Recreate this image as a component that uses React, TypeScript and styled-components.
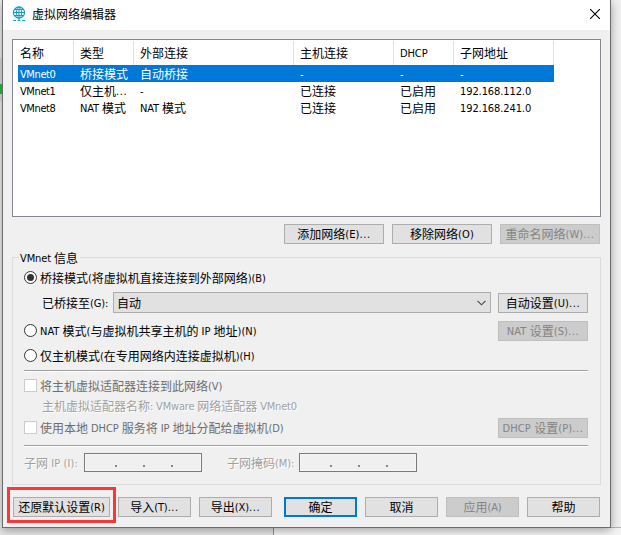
import React from 'react';
import styled, { createGlobalStyle, css } from 'styled-components';

const GlobalStyle = createGlobalStyle`
  * { box-sizing: border-box; }
  body {
    margin: 0;
    font-family: "Noto Sans CJK SC", sans-serif;
    font-size: 12px;
    line-height: 16px;
    color: #000;
    white-space: nowrap;
  }
`;

const Desktop = styled.div`
  position: relative;
  width: 621px;
  height: 535px;
  overflow: hidden;
  background: #f0f0f0;
`;

const Backdrop = styled.div`
  position: absolute;
  left: 0;
  top: 527px;
  width: 274px;
  height: 8px;
  background: #e6e6e6;
  border-right: 1px solid #8e8e8e;
`;

const BackdropEdge = styled.div`
  position: absolute;
  left: 274px;
  right: 0;
  top: 527px;
  height: 8px;
  background: #f4f4f4;
  border-top: 1px solid #b4b4b4;
`;

const SideMark = styled.div<{ $top: number; $height: number; $color: string }>`
  position: absolute;
  left: 0;
  top: ${p => p.$top}px;
  width: 2px;
  height: ${p => p.$height}px;
  background: ${p => p.$color};
`;

const Window = styled.div`
  position: relative;
  width: 609px;
  height: 528px;
  margin-left: 2px;
  border: 1px solid #6b6b6b;
  border-top: 0;
  background: #f0f0f0;
  box-shadow: 0 2px 9px rgba(0, 0, 0, 0.36);
`;

const TitleBar = styled.header`
  display: flex;
  align-items: center;
  height: 30px;
  padding: 0 10px 2px 9px;
  background: #fff;
`;

const Title = styled.h1`
  flex: 1;
  margin: 0 0 0 6px;
  font-size: 12px;
  font-weight: 400;
  line-height: 16px;
`;

const CloseButton = styled.button`
  display: flex;
  padding: 0;
  border: 0;
  background: none;
`;

const Body = styled.main`
  padding: 9px 9px 0;
`;

const Latin = styled.span<{ $spacing: number }>`
  font-family: "DejaVu Sans Condensed", "DejaVu Sans", sans-serif;
  font-stretch: condensed;
  font-size: 11px;
  line-height: 1;
  vertical-align: 1px;
  letter-spacing: ${p => p.$spacing}px;
`;

const Table = styled.div`
  height: 178px;
  padding: 1px 5px;
  border: 1px solid #828790;
  background: #fff;
`;

const rowGrid = css`
  display: grid;
  grid-template-columns: 56px 60px 160px 100px 60px 100px;
  width: 536px;
`;

const HeaderRow = styled.div`
  ${rowGrid}
  height: 24px;
`;

const HeaderCell = styled.div`
  padding: 4px 0 0 2px;
  border-right: 1px solid #e0e0e0;
  & + & { padding-left: 6px; }
`;

const Row = styled.div<{ $selected?: boolean }>`
  ${rowGrid}
  height: 17px;
  color: ${p => (p.$selected ? '#fff' : '#000')};
  background: ${p => (p.$selected ? '#0078d7' : 'transparent')};
`;

const Cell = styled.div`
  padding-left: 2px;
  line-height: 17px;
  & + & { padding-left: 6px; }
`;

const TableActions = styled.div`
  display: flex;
  justify-content: flex-end;
  gap: 8px;
  padding: 7px 1px 0 0;
`;

const Button = styled.button<{ $width: number; $primary?: boolean }>`
  flex: none;
  width: ${p => p.$width}px;
  height: 20px;
  padding: 0;
  border: ${p => (p.$primary ? '2px solid #0078d7' : '1px solid #adadad')};
  background: #e1e1e1;
  color: #000;
  font: inherit;
  line-height: ${p => (p.$primary ? 16 : 18)}px;
  text-align: center;
  white-space: nowrap;
  &:disabled {
    border-color: #bfbfbf;
    background: #ccc;
    color: #838383;
  }
`;

const Group = styled.section`
  height: 228px;
  margin-top: 13px;
  padding: 0 12px 0 11px;
  border: 1px solid #dcdcdc;
`;

const Legend = styled.div`
  width: fit-content;
  height: 16px;
  margin: -8px 0 0 -5px;
  padding: 0 2px 0 1px;
  background: #f0f0f0;
`;

const Line = styled.div<{ $height: number; $top?: number; $indent?: number; $gap?: number; $end?: boolean }>`
  display: flex;
  align-items: ${p => (p.$end ? 'flex-end' : 'center')};
  height: ${p => p.$height}px;
  margin-top: ${p => p.$top ?? 0}px;
  padding-left: ${p => p.$indent ?? 0}px;
  gap: ${p => p.$gap ?? 3}px;
`;

const Label = styled.span<{ $tone?: 'disabled' | 'etched'; $width?: number; $lift?: number }>`
  flex: ${p => (p.$width ? 'none' : '1')};
  width: ${p => (p.$width ? `${p.$width}px` : 'auto')};
  padding-bottom: ${p => p.$lift ?? 0}px;
  color: ${p => (p.$tone === 'disabled' ? '#6d6d6d' : p.$tone === 'etched' ? '#a0a0a0' : '#000')};
  text-shadow: ${p => (p.$tone === 'etched' ? '1px 1px 0 #fff' : 'none')};
`;

const Radio = styled.span<{ $checked?: boolean; $raised?: boolean }>`
  display: grid;
  place-items: center;
  flex: none;
  width: 13px;
  height: 13px;
  margin-bottom: ${p => (p.$raised ? 1 : 0)}px;
  border: 1px solid #333;
  border-radius: 50%;
  background: #fff;
  &::after {
    content: "";
    width: 7px;
    height: 7px;
    border-radius: 50%;
    background: ${p => (p.$checked ? '#333' : 'transparent')};
  }
`;

const Checkbox = styled.span<{ $raised?: boolean }>`
  flex: none;
  width: 13px;
  height: 13px;
  margin-bottom: ${p => (p.$raised ? 1 : 0)}px;
  border: 1px solid #ccc;
  background: #fff;
`;

const Combo = styled.div`
  display: flex;
  align-items: center;
  justify-content: space-between;
  flex: none;
  width: 378px;
  height: 21px;
  margin-right: 7px;
  padding: 0 4px 0 3px;
  border: 1px solid #adadad;
  background: #e1e1e1;
`;

const Separator = styled.div`
  height: 2px;
  border-top: 1px solid #a0a0a0;
  border-bottom: 1px solid #fff;
`;

const AddressField = styled.div`
  display: flex;
  flex: none;
  gap: 26px;
  width: 118px;
  height: 19px;
  padding: 11px 0 0 30px;
  border: 1px solid #7a7a7a;
  box-shadow: inset 0 0 0 1px #f6f6f6;
`;

const Dot = styled.i`
  width: 2px;
  height: 2px;
  background: #858585;
`;

const Footer = styled.footer`
  display: flex;
  gap: 8px;
  padding: 12px 0 0 1px;
`;

const Spacer = styled.span`
  width: 4px;
  margin-right: -8px;
`;

const Highlight = styled.div`
  position: absolute;
  left: 4px;
  top: 487px;
  width: 109px;
  height: 36px;
  border: 3px solid #fb3636;
`;

function T({ children, spacing = -0.1 }: { children: string; spacing?: number }) {
  const runs = children.match(/\.{3}|(?:(?!\.{3})[\x20-\x7e])+|[^\x20-\x7e]+/g) ?? [];
  return (
    <>
      {runs.map((run, i) => {
        if (run === '...') return <Latin key={i} $spacing={0.6}>{run}</Latin>;
        return /^[\x20-\x7e]/.test(run) ? <Latin key={i} $spacing={spacing}>{run}</Latin> : run;
      })}
    </>
  );
}

function GlobeIcon() {
  return (
    <svg width="14" height="16" viewBox="0 0 14 16" fill="none" stroke="#149bc5">
      <circle cx="7" cy="6.5" r="5.6" strokeWidth="1.1" />
      <ellipse cx="7" cy="6.5" rx="2.7" ry="5.6" />
      <path d="M1.5 6.5h11M2.3 3.5h9.4M2.3 9.5h9.4M7 1v13" />
      <path d="M1 14.5h3M5.5 14.5h3M10 14.5h3" stroke="#16b89c" />
    </svg>
  );
}

const columns = ['名称', '类型', '外部连接', '主机连接', 'DHCP', '子网地址'];
const networks = [
  ['VMnet0', '桥接模式', '自动桥接', '-', '-', '-'],
  ['VMnet1', '仅主机...', '-', '已连接', '已启用', '192.168.112.0'],
  ['VMnet8', 'NAT 模式', 'NAT 模式', '已连接', '已启用', '192.168.241.0'],
];

export default function App() {
  return (
    <Desktop>
      <GlobalStyle />
      <Backdrop />
      <BackdropEdge />
      <Window>
        <TitleBar>
          <GlobeIcon />
          <Title>虚拟网络编辑器</Title>
          <CloseButton aria-label="关闭">
            <svg width="10" height="10" viewBox="0 0 10 10" stroke="#000" strokeWidth="1.1">
              <path d="M0 0l10 10M10 0L0 10" />
            </svg>
          </CloseButton>
        </TitleBar>
        <Body>
          <Table>
            <HeaderRow>
              {columns.map(c => <HeaderCell key={c}><T>{c}</T></HeaderCell>)}
            </HeaderRow>
            {networks.map((cells, i) => (
              <Row key={cells[0]} $selected={i === 0}>
                {cells.map((c, j) => (
                  <Cell key={j}>
                    <T spacing={j === 0 ? -0.4 : -0.1}>{c}</T>
                  </Cell>
                ))}
              </Row>
            ))}
          </Table>
          <TableActions>
            <Button $width={100}><T spacing={0.1}>添加网络(E)...</T></Button>
            <Button $width={100}><T spacing={0.1}>移除网络(O)</T></Button>
            <Button $width={100} disabled><T spacing={0.1}>重命名网络(W)...</T></Button>
          </TableActions>
          <Group>
            <Legend><T>VMnet 信息</T></Legend>
            <Line $height={21} $top={1}>
              <Radio $checked />
              <Label><T>桥接模式(将虚拟机直接连接到外部网络)(B)</T></Label>
            </Line>
            <Line $height={21} $top={4} $indent={18} $gap={0} $end>
              <Label $width={71} $lift={2}><T>已桥接至(G):</T></Label>
              <Combo>
                <T>自动</T>
                <svg width="9" height="6" viewBox="0 0 9 6" fill="none" stroke="#444" strokeWidth="1.1">
                  <path d="M0.5 0.8l4 4 4-4" />
                </svg>
              </Combo>
              <Button $width={90}><T spacing={0.1}>自动设置(U)...</T></Button>
            </Line>
            <Line $height={20} $top={8}>
              <Radio $raised />
              <Label><T spacing={0}>NAT 模式(与虚拟机共享主机的 IP 地址)(N)</T></Label>
              <Button $width={90} disabled><T spacing={0.1}>NAT 设置(S)...</T></Button>
            </Line>
            <Line $height={17} $top={6}>
              <Radio />
              <Label><T>仅主机模式(在专用网络内连接虚拟机)(H)</T></Label>
            </Line>
            <Line $height={6} />
            <Separator />
            <Line $height={17} $top={5}>
              <Checkbox />
              <Label $tone="disabled"><T>将主机虚拟适配器连接到此网络(V)</T></Label>
            </Line>
            <Line $height={18} $top={3} $indent={18}>
              <Label $tone="etched" $lift={1}><T spacing={-0.2}>主机虚拟适配器名称: VMware 网络适配器 VMnet0</T></Label>
            </Line>
            <Line $height={20} $top={3}>
              <Checkbox $raised />
              <Label $tone="disabled"><T>使用本地 DHCP 服务将 IP 地址分配给虚拟机(D)</T></Label>
              <Button $width={90} disabled><T spacing={0.1}>DHCP 设置(P)...</T></Button>
            </Line>
            <Line $height={7} />
            <Separator />
            <Line $height={19} $top={6} $gap={0}>
              <Label $tone="etched" $width={60}><T spacing={0.1}>子网 IP (I):</T></Label>
              <AddressField><Dot /><Dot /><Dot /></AddressField>
              <Line $height={19} $indent={25} $gap={0}>
                <Label $tone="etched" $width={72}><T>子网掩码(M):</T></Label>
                <AddressField><Dot /><Dot /><Dot /></AddressField>
              </Line>
            </Line>
          </Group>
          <Footer>
            <Button $width={97}><T>还原默认设置(R)</T></Button>
            <Button $width={73}><T>导入(T)...</T></Button>
            <Button $width={73}><T>导出(X)...</T></Button>
            <Spacer />
            <Button $width={73} $primary><T>确定</T></Button>
            <Button $width={73}><T>取消</T></Button>
            <Button $width={73} disabled><T>应用(A)</T></Button>
            <Button $width={73}><T>帮助</T></Button>
          </Footer>
        </Body>
        <Highlight />
      </Window>
      <SideMark $top={58} $height={43} $color="#bdbdbd" />
      <SideMark $top={84} $height={10} $color="#1fa53a" />
    </Desktop>
  );
}
